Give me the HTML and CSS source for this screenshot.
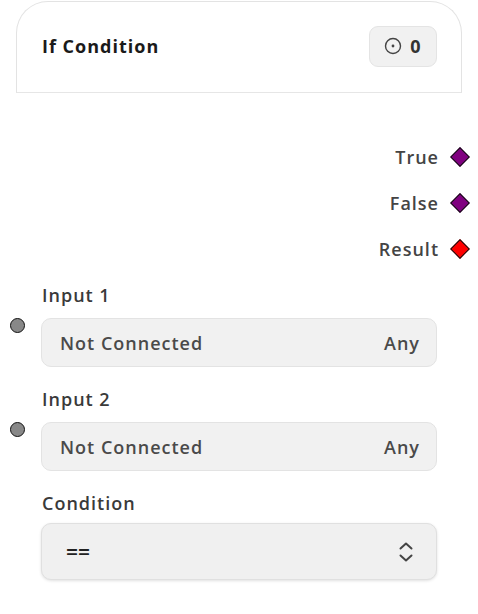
FILE: index.html
```html
<!DOCTYPE html>
<html>
<head>
<meta charset="utf-8">
<link rel="stylesheet" href="styles.css">
</head>
<body>
<div class="node">
  <div class="header">
    <div class="title">If Condition</div>
    <div class="badge">
      <svg width="18" height="18" viewBox="0 0 18 18"><circle cx="9" cy="9" r="7.5" fill="none" stroke="#444" stroke-width="1.4"/><circle cx="9" cy="9" r="1.4" fill="#444"/></svg>
      <span>0</span>
    </div>
  </div>
  <div class="outputs">
    <div class="out"><span>True</span><i class="diamond purple"></i></div>
    <div class="out"><span>False</span><i class="diamond purple"></i></div>
    <div class="out"><span>Result</span><i class="diamond red"></i></div>
  </div>
  <div class="field">
    <div class="label">Input 1</div>
    <div class="row">
      <i class="handle"></i>
      <div class="box"><span>Not Connected</span><span>Any</span></div>
    </div>
  </div>
  <div class="field">
    <div class="label">Input 2</div>
    <div class="row">
      <i class="handle"></i>
      <div class="box"><span>Not Connected</span><span>Any</span></div>
    </div>
  </div>
  <div class="field">
    <div class="label">Condition</div>
    <div class="select">
      <span class="op">==</span>
      <svg width="16" height="24" viewBox="0 0 16 24"><path d="M2.5 8.5 L8 3.5 L13.5 8.5 M2.5 15.5 L8 20.5 L13.5 15.5" fill="none" stroke="#444" stroke-width="2" stroke-linecap="round" stroke-linejoin="round"/></svg>
    </div>
  </div>
</div>
</body>
</html>
```
FILE: styles.css
```css
* { box-sizing: border-box; }
body {
  margin: 0;
  background: #fff;
  font-family: "Open Sans", "Noto Sans", sans-serif;
  color: #333;
  width: 478px;
  height: 614px;
  overflow: hidden;
  letter-spacing: 1px;
}
.node { padding-top: 1px; }
.header {
  margin-left: 16px;
  width: 446px;
  height: 92px;
  border: 1px solid #e3e3e3;
  border-bottom-color: #e6e6e6;
  border-radius: 32px 32px 0 0;
  display: flex;
  align-items: center;
  justify-content: space-between;
  padding: 0 24px 0 25px;
}
.title {
  font-size: 18px;
  font-weight: 700;
  color: #1a1a1a;
  margin-top: -2px;
}
.badge {
  display: flex;
  align-items: center;
  gap: 8px;
  height: 41px;
  width: 68px;
  justify-content: center;
  background: #f1f1f1;
  border: 1px solid #e4e4e4;
  border-radius: 9px;
  font-size: 18px;
  font-weight: 700;
  color: #333;
  margin-top: -2px;
}
.outputs {
  display: flex;
  flex-direction: column;
  align-items: flex-end;
  gap: 24px;
  padding: 53px 8px 0 0;
}
.out {
  display: flex;
  align-items: center;
  gap: 14px;
  font-size: 18px;
  font-weight: 600;
  color: #444;
  height: 22px;
}
.diamond {
  display: block;
  width: 14px;
  height: 14px;
  transform: rotate(45deg);
  border: 1.5px solid #111;
  margin-right: 3px;
}
.purple { background: #800080; }
.red { background: #ff0000; }
.field { margin-top: 24px; }
.field + .field { margin-top: 21px; }
.label {
  margin-left: 42px;
  font-size: 18px;
  font-weight: 600;
  color: #3a3a3a;
  height: 22px;
  line-height: 22px;
}
.row {
  display: flex;
  align-items: flex-start;
  margin-top: 12px;
}
.handle {
  display: block;
  width: 15px;
  height: 15px;
  border-radius: 50%;
  background: #888;
  border: 1.5px solid #111;
  margin: 0 16px 0 10px;
}
.box {
  width: 396px;
  height: 49px;
  background: #f1f1f1;
  border: 1px solid #e3e3e3;
  border-radius: 10px;
  display: flex;
  align-items: center;
  justify-content: space-between;
  padding: 0 16px 0 18px;
  font-size: 18px;
  font-weight: 600;
  color: #4a4a4a;
}
.select {
  margin: 9px 0 0 41px;
  width: 396px;
  height: 57px;
  background: #f0f0f0;
  border: 1px solid #e0e0e0;
  border-radius: 10px;
  box-shadow: 0 1px 3px rgba(0,0,0,0.12);
  display: flex;
  align-items: center;
  justify-content: space-between;
  padding: 0 22px 0 24px;
}
.op {
  font-size: 21px;
  font-weight: 600;
  color: #222;
  letter-spacing: 0;
}
```
